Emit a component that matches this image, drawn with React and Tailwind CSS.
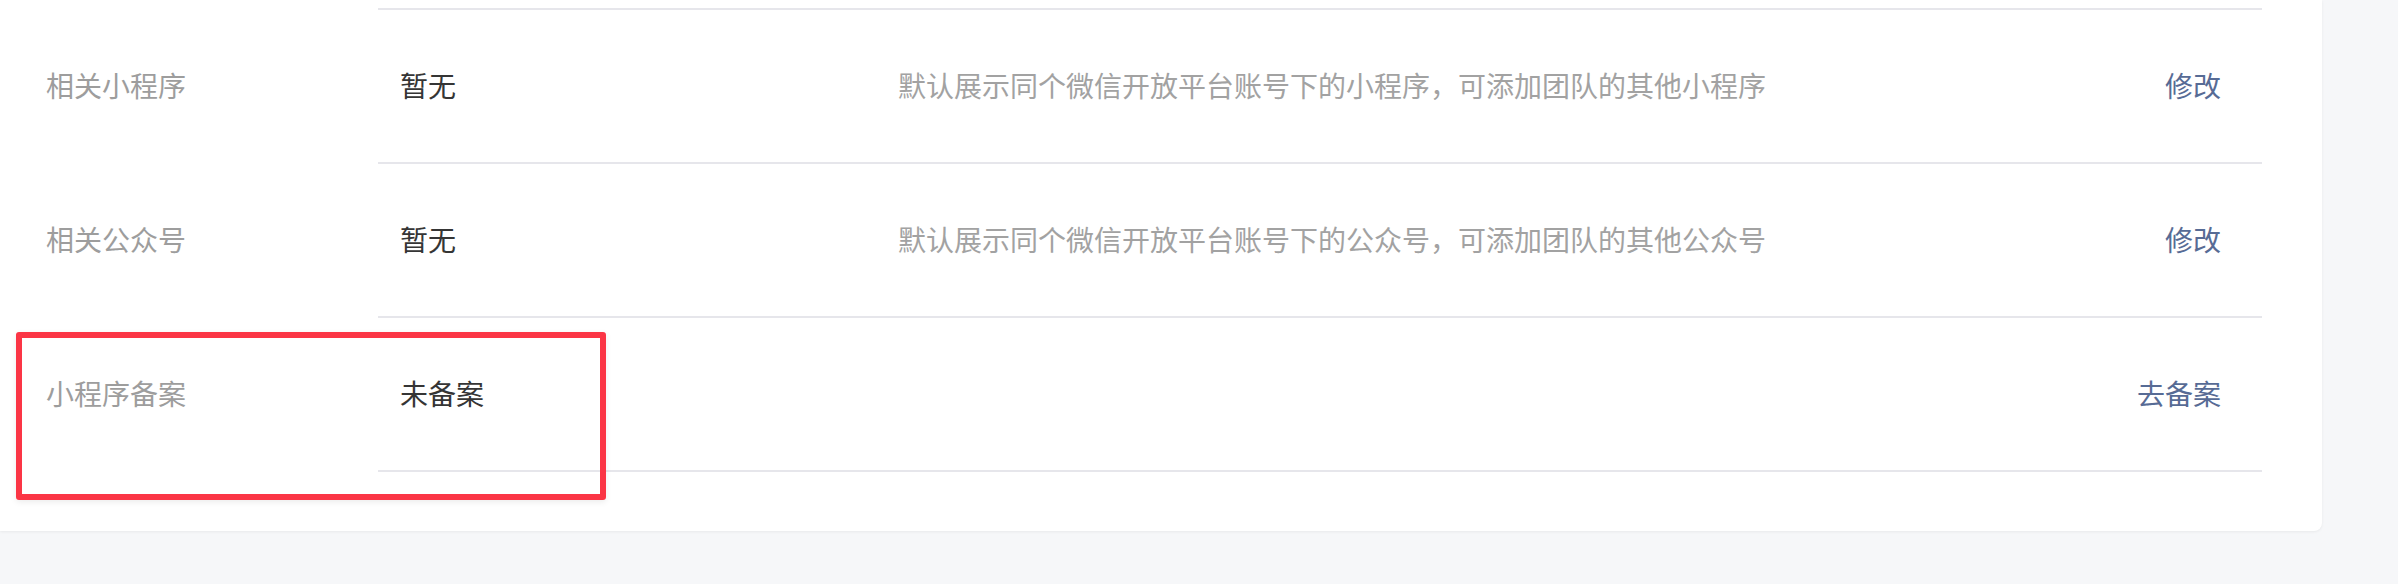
import React from 'react'

const rows = [
  {
    label: '相关小程序',
    value: '暂无',
    desc: '默认展示同个微信开放平台账号下的小程序，可添加团队的其他小程序',
    action: '修改',
  },
  {
    label: '相关公众号',
    value: '暂无',
    desc: '默认展示同个微信开放平台账号下的公众号，可添加团队的其他公众号',
    action: '修改',
  },
  {
    label: '小程序备案',
    value: '未备案',
    desc: '',
    action: '去备案',
  },
]

const App = () => {
  return (
    <div
      className="relative min-h-screen w-[2398px] bg-[#f6f7f9]"
      style={{ fontFamily: '"Noto Sans CJK SC", "Noto Sans", sans-serif' }}
    >
      {/* Card */}
      <div className="w-[2322px] bg-white pr-[60px] pb-[59px] rounded-br-[8px] shadow-[0_1px_3px_rgba(0,0,0,0.06)]">
        <div className="ml-[378px] h-[10px] border-b-2 border-[#e6e6eb]" />
        {rows.map((row) => (
          <div key={row.label} className="flex h-[154px]">
            <div className="w-[378px] shrink-0 pl-[46px] flex items-center text-[28px] text-[#9d9d9d] pb-[5px]">
              {row.label}
            </div>
            <div className="flex-1 flex items-center border-b-2 border-[#e6e6eb] pl-[22px] pr-[41px] pb-[3px] text-[28px]">
              <div className="w-[498px] shrink-0 text-[#353535]">{row.value}</div>
              <div className="flex-1 text-[#a2a2a2]">{row.desc}</div>
              <a className="text-[#576b95] cursor-pointer">{row.action}</a>
            </div>
          </div>
        ))}
      </div>

      {/* Annotation box */}
      <div className="absolute left-[16px] top-[332px] w-[590px] h-[168px] border-[6px] border-[#fb3545] rounded-[3px] shadow-[0_2px_6px_rgba(0,0,0,0.08)]" />
    </div>
  )
}

export default App
